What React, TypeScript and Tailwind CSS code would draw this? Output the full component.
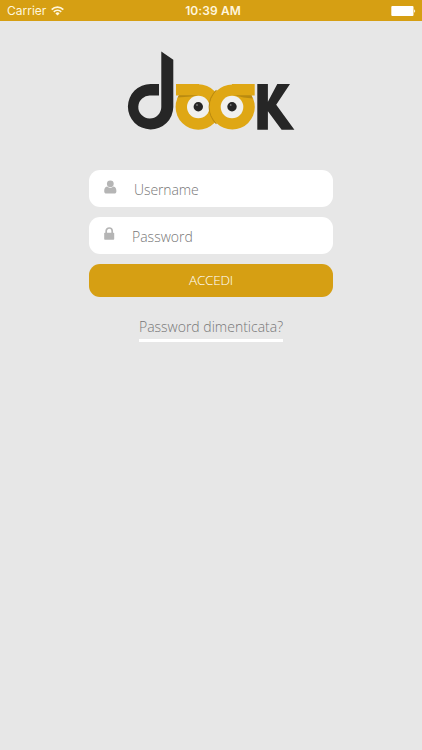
function StatusBar() {
  return (
    <header className="relative flex h-[21px] items-center justify-between bg-[#d69f13] pl-[7px] pr-[6px] font-[Inter] text-xs text-[#fff6dc]">
      <div className="flex items-center gap-[5px]">
        <span className="leading-none">Carrier</span>
        <svg width="13" height="10" viewBox="0 0 13 10" fill="none" stroke="currentColor" strokeWidth="1.7">
          <path d="M0.7 3.6a8.2 8.2 0 0 1 11.6 0M2.8 5.8a5.2 5.2 0 0 1 7.4 0" />
          <path d="M6.5 9.6 4.4 7.4a3 3 0 0 1 4.2 0z" fill="currentColor" stroke="none" />
        </svg>
      </div>
      <span className="absolute inset-x-0 pl-1 text-center font-semibold leading-none tracking-[0.1px]">10:39 AM</span>
      <svg width="25" height="10" viewBox="0 0 25 10" fill="#fff">
        <rect x="0.3" y="0" width="22.2" height="10" rx="1" />
        <path d="M23.2 3.2q2 1.8 0 3.6z" />
      </svg>
    </header>
  );
}

function Logo() {
  return (
    <svg width="168" height="80" viewBox="127 51 168 80" role="img" aria-label="dook">
      <path
        fill="#262626"
        fillRule="evenodd"
        d="M161.3 51.5 173.3 59.7V107a22.7 22.7 0 1 1-22.7-23H159V95.5H150.6a11.5 11.5 0 1 0 10.7 11.5z"
      />
      {/* left eye */}
      <circle cx="198.3" cy="107" r="22.7" fill="#dfa714" />
      <path d="M176 84h23v11.5h-23z" fill="#dfa714" />
      <path d="M179 95.3h20l-8 1.2-13.5 1z" fill="#b98a10" />
      <circle cx="198.3" cy="107" r="11.3" fill="#f0f0ee" />
      {/* right eye, overlapping the left one */}
      <path d="M216.5 90.2a23 23 0 0 0 0 33.6" fill="none" stroke="#bd8c10" strokeWidth="1.2" />
      <circle cx="232.3" cy="107" r="22.5" fill="#dfa714" />
      <path d="M232 84h22.7v11.5H232z" fill="#dfa714" />
      <path d="M234 95.3h17.5l1.2 3.2-9-1z" fill="#b98a10" />
      <circle cx="232" cy="107" r="11.3" fill="#f0f0ee" />
      <circle cx="198.3" cy="106.7" r="4.7" fill="#262626" />
      <circle cx="232" cy="106.7" r="4.7" fill="#262626" />
      <circle cx="197" cy="105" r="0.9" fill="#777" />
      <circle cx="230.7" cy="105" r="0.9" fill="#777" />
      <path
        fill="#262626"
        d="M257.3 84h10.6v17.8L277.3 84H290l-13.8 20.8 18.2 24.9H281.6l-13.7-18.4v18.4h-10.6z"
      />
    </svg>
  );
}

function UserIcon() {
  return (
    <svg className="mb-[3px] h-[14px] w-[13px] text-[#b5b5b5]" viewBox="0 0 13 14" fill="currentColor">
      <circle cx="6.3" cy="3.8" r="3.4" />
      <path d="M3.2 6.6C1 7 .2 8.8.2 11.2c0 1.5.9 2.3 2.1 2.3h8c1.2 0 2.1-.8 2.1-2.3 0-2.4-.8-4.2-3-4.6a4.8 4.8 0 0 1-6.2 0z" />
    </svg>
  );
}

function LockIcon() {
  return (
    <svg className="mb-[4px] h-[13px] w-[11px] text-[#b5b5b5]" viewBox="0 0 11 13" fill="currentColor">
      <path d="M2.2 6.5V4a3 3 0 0 1 6 0v2.5" fill="none" stroke="currentColor" strokeWidth="1.7" />
      <rect x="0.2" y="5.7" width="10" height="7" rx="0.7" />
    </svg>
  );
}

export default function App() {
  return (
    <div className="min-h-[750px] bg-[#e7e7e7] font-['Open_Sans',sans-serif]">
      <StatusBar />
      <main className="flex flex-col items-center pt-[30px]">
        <Logo />
        <form className="mt-[39px] flex w-[244px] flex-col gap-[10px] text-sm font-light text-[#777]">
          <label className="flex h-[37px] items-center rounded-[11px] bg-white pl-[15px]">
            <UserIcon />
            <span className="ml-[17px] pt-[2px] tracking-[-0.1px]">Username</span>
          </label>
          <label className="flex h-[37px] items-center rounded-[11px] bg-white pl-[15px]">
            <LockIcon />
            <span className="ml-[17px] pt-[2px]">Password</span>
          </label>
          <button type="button" className="h-[33px] rounded-[11px] bg-[#d69f13] pt-px text-[13.5px] tracking-[-0.25px] text-white">
            ACCEDI
          </button>
        </form>
        <a className="mt-[20px] border-b-[3px] border-white pb-[2px] text-sm font-light text-[#777]">Password dimenticata?</a>
      </main>
    </div>
  );
}
